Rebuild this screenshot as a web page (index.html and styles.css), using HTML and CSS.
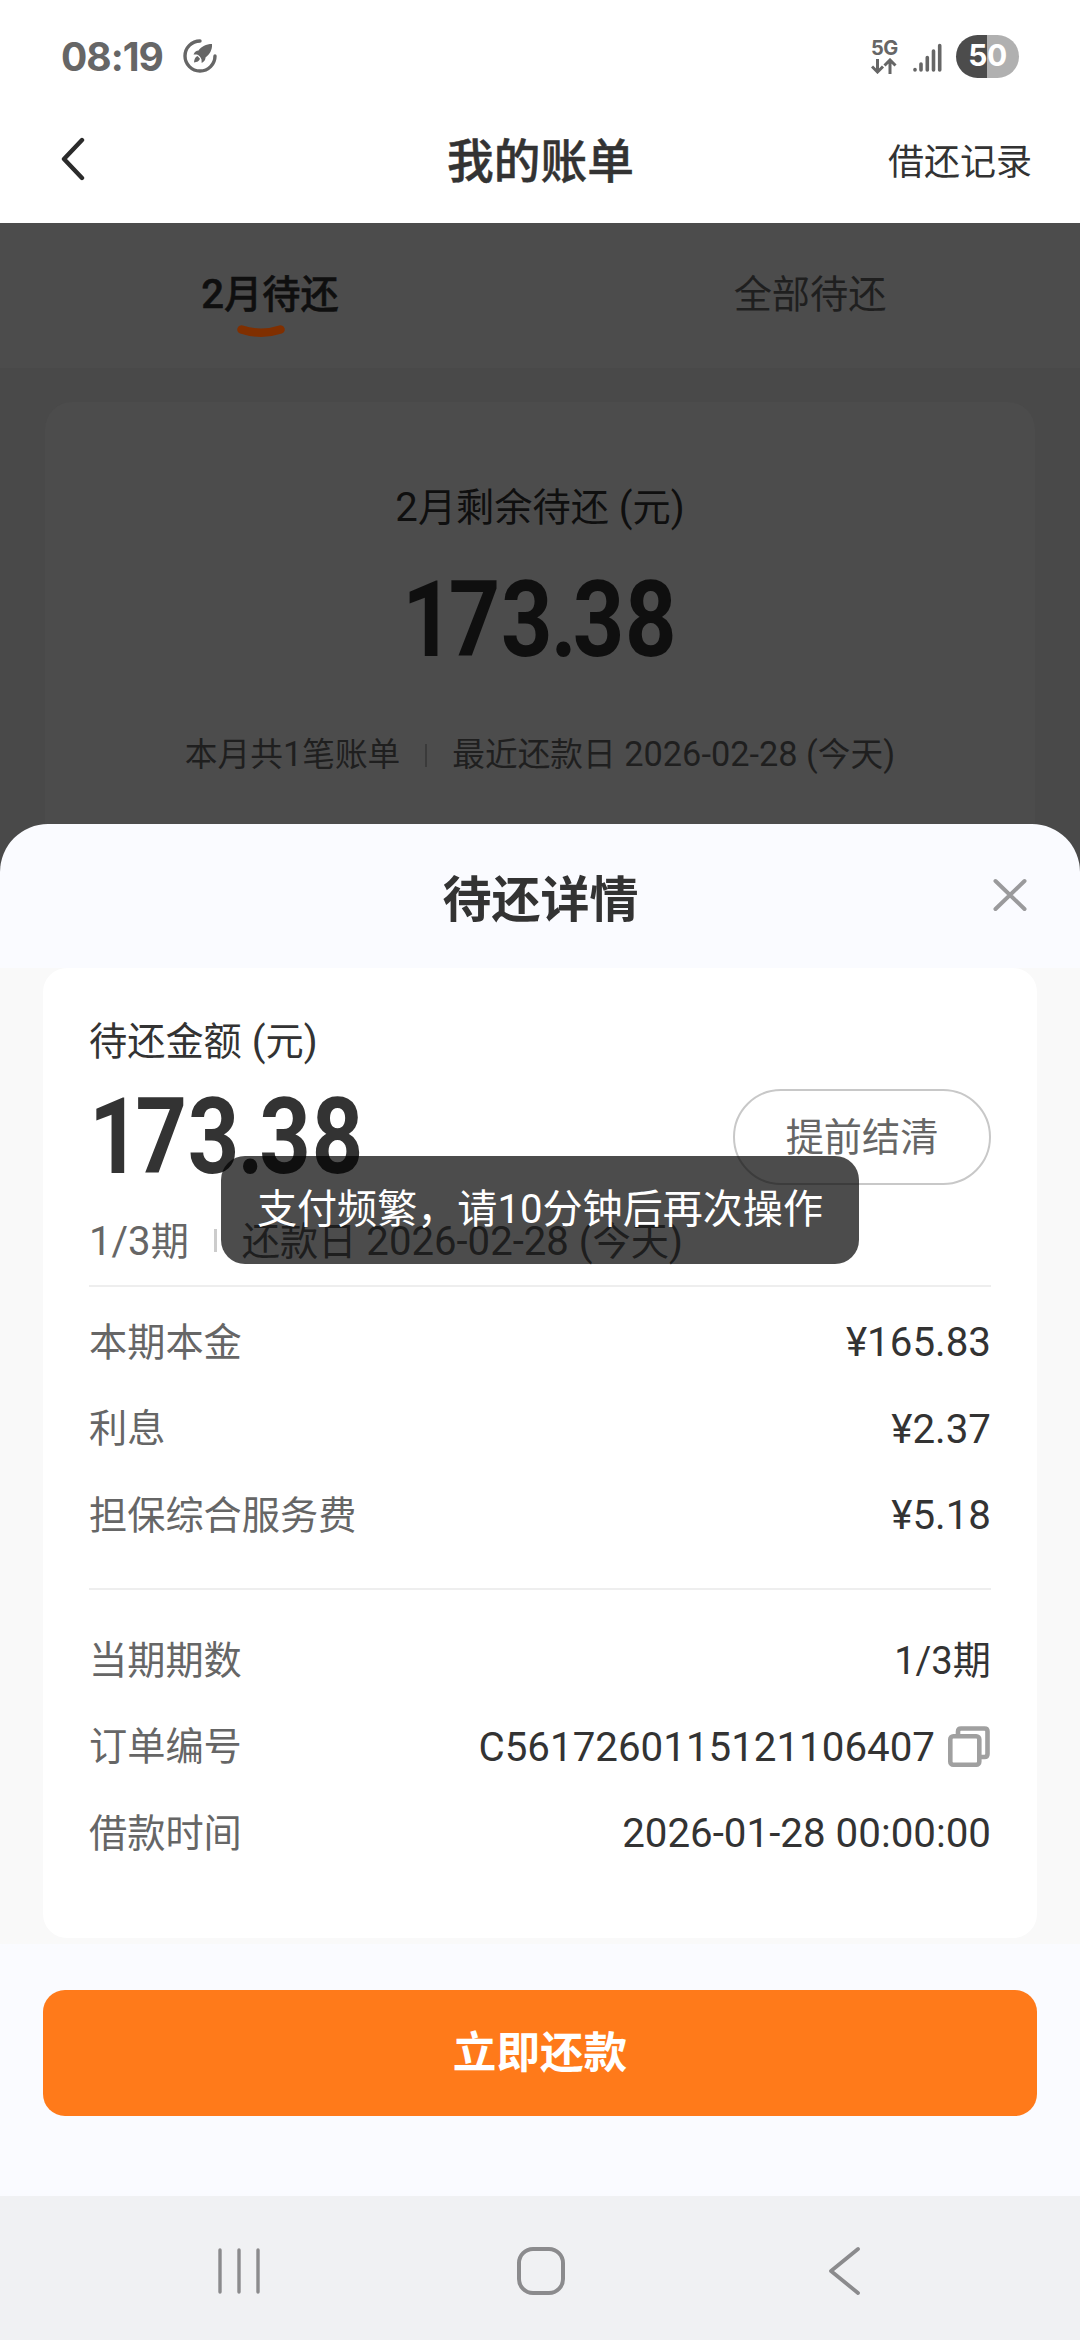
FILE: index.html
```html
<!DOCTYPE html>
<html lang="zh-CN">
<head>
<meta charset="utf-8">
<title>我的账单</title>
<link rel="stylesheet" href="styles.css">
</head>
<body>
<div class="phone">
  <header class="status">
    <div class="status-left">
      <span class="clock">08:19</span>
      <svg class="rocket" width="34" height="34" viewBox="0 0 34 34">
        <path d="M17 2A15 15 0 1 0 32 17" fill="none" stroke="#666" stroke-width="3.4" stroke-linecap="round"/>
        <path d="M29 5C23 5 18.500 7.500 15.500 11.500C13.500 11.500 11.500 13 10.500 15.500L14 15.500C16 16 18 18.500 18.500 20.500L18.700 24C21.500 22.500 22.500 20.500 22.500 18.500C26.500 15.500 29.500 11 29 5Z" fill="#666"/>
        <path d="M14.500 17C12 18 11.300 20.500 11 23.500C14 23.200 16.300 22.200 17 19.800Z" fill="#666"/>
      </svg>
    </div>
    <div class="status-right">
      <div class="net">
        <span class="net-type">5G</span>
        <svg width="26" height="16" viewBox="0 0 26 16" fill="none" stroke="#666" stroke-width="3">
          <path d="M6.500 1V14M1 8.500L6.500 14L12 8.500M19 16V2M13.500 7.500L19 2L24.500 7.500"/>
        </svg>
      </div>
      <svg class="signal" width="29" height="30" viewBox="0 0 29 30" stroke="#666" stroke-width="3.600" stroke-linecap="round">
        <path d="M2 27.500V28M8 22V28M14.300 15.500V28M20.500 9V28M26.700 3.500V28"/>
      </svg>
      <div class="battery"><span>50</span></div>
    </div>
  </header>

  <nav class="titlebar">
    <svg class="back" width="24" height="44" viewBox="0 0 24 44" fill="none" stroke="#2b2b2b" stroke-width="4.400" stroke-linecap="round" stroke-linejoin="round">
      <path d="M21 3L3 22L21 41"/>
    </svg>
    <h1>我的账单</h1>
    <a class="history">借还记录</a>
  </nav>

  <main class="page">
    <div class="tabs">
      <div class="tab active"><span class="n">2</span>月待还
        <svg class="smile" width="50" height="16" viewBox="0 0 50 16"><path d="M5.500 5.500Q25 12 44.500 5.500" fill="none" stroke="#802f00" stroke-width="8.500" stroke-linecap="round"/></svg>
      </div>
      <div class="tab">全部待还</div>
    </div>
    <section class="summary">
      <p class="summary-label"><span class="n">2</span>月剩余待还<span class="n"> (</span>元<span class="n">)</span></p>
      <p class="amount"><span class="one">1</span>73<span class="dot">.</span>38</p>
      <p class="summary-foot">
        <span>本月共<span class="n">1</span>笔账单</span><i class="bar"></i><span>最近还款日<span class="n"> 2026-02-28 (</span>今天<span class="n">)</span></span>
      </p>
    </section>
  </main>

  <section class="sheet">
    <header class="sheet-head">
      <h2>待还详情</h2>
      <svg class="close" width="36" height="34" viewBox="0 0 36 34" fill="none" stroke="#9a9a9c" stroke-width="4" stroke-linecap="round">
        <path d="M3.500 3L32.500 31M32.500 3L3.500 31"/>
      </svg>
    </header>
    <div class="sheet-body">
      <div class="card">
        <p class="due-label">待还金额<span class="n"> (</span>元<span class="n">)</span></p>
        <div class="due-row">
          <p class="amount"><span class="one">1</span>73<span class="dot">.</span>38</p>
          <button class="settle">提前结清</button>
        </div>
        <p class="due-date"><span><span class="n">1/3</span>期</span><i class="bar"></i><span>还款日<span class="n"> 2026-02-28 (</span>今天<span class="n">)</span></span></p>
        <dl class="rows fees">
          <div><dt>本期本金</dt><dd>¥165.83</dd></div>
          <div><dt>利息</dt><dd>¥2.37</dd></div>
          <div><dt>担保综合服务费</dt><dd>¥5.18</dd></div>
        </dl>
        <dl class="rows info">
          <div><dt>当期期数</dt><dd class="term">1/3期</dd></div>
          <div><dt>订单编号</dt><dd>C5617260115121106407
            <svg class="copy" width="44" height="44" viewBox="0 0 44 44" fill="none" stroke="#a0a0a0" stroke-width="4.600">
              <rect x="3.300" y="11.300" width="29" height="28.500" rx="3"/>
              <path d="M11 10V6.500Q11 3.500 14 3.500H37.500Q40.500 3.500 40.500 6.500V29Q40.500 32 37.500 32H34"/>
            </svg></dd></div>
          <div><dt>借款时间</dt><dd>2026-01-28 00:00:00</dd></div>
        </dl>
      </div>
    </div>
    <footer class="sheet-foot"><button class="pay">立即还款</button></footer>
  </section>

  <footer class="sysnav">
    <svg width="44" height="48" viewBox="0 0 44 48" stroke="#8b8b8d" stroke-width="3.400" stroke-linecap="round"><path d="M3 3V45M22 3V45M41 3V45"/></svg>
    <svg class="home" width="50" height="50" viewBox="0 0 50 50" fill="none" stroke="#8b8b8d" stroke-width="4"><rect x="3" y="3" width="44" height="44" rx="14"/></svg>
    <svg width="34" height="50" viewBox="0 0 34 50" fill="none" stroke="#8b8b8d" stroke-width="3.800" stroke-linecap="round" stroke-linejoin="round"><path d="M31 3L4 25L31 47"/></svg>
  </footer>

  <div class="toast">支付频繁，请10分钟后再次操作</div>
</div>
</body>
</html>
```
FILE: styles.css
```css
* { box-sizing: border-box; margin: 0; padding: 0; }

body {
  width: 1080px;
  background: #fff;
  color: #333;
  font-family: Roboto, "Noto Sans CJK SC", sans-serif;
  font-size: 38.2px;
}

button { font: inherit; }
svg { display: block; flex: none; }

.n { font-size: 1.05em; line-height: 1; white-space: pre; }

.phone {
  position: relative;
  display: flex;
  flex-direction: column;
  height: 2340px;
  overflow: hidden;
}
.phone > * { flex: none; }

/* System status bar */
.status {
  display: flex;
  justify-content: space-between;
  align-items: center;
  height: 112px;
  padding: 0 61px 0 61px;
  color: #666;
}
.status-left, .status-right { display: flex; align-items: center; }
.clock { font: 700 39px/40px Inter, sans-serif; width: 122px; letter-spacing: -1px; padding-top: 1px; }
.status-right { gap: 16px; }
.net { display: flex; flex-direction: column; gap: 1px; padding-top: 1px; width: 26px; }
.net-type { font: 700 20px/17px Inter, sans-serif; letter-spacing: -0.5px; }
.signal { margin-top: 2px; }
.battery {
  display: flex;
  align-items: center;
  justify-content: center;
  width: 63px;
  height: 43px;
  margin-left: -2px;
  border-radius: 22px;
  background: linear-gradient(90deg, #4c4c4c 50%, #b0b0b0 50%);
  color: #fff;
  font: 700 30px/40px Inter, sans-serif;
}
.battery span { margin-top: -2px; letter-spacing: -0.5px; }

/* Title bar */
.titlebar {
  display: grid;
  grid-template-columns: 1fr auto 1fr;
  align-items: center;
  height: 111px;
  padding: 0 48px 15px 61px;
}
.titlebar h1 { font-size: 46.7px; font-weight: 500; line-height: 60px; margin: 4px 6px 0 -6px; -webkit-text-stroke: 0.5px; }
.back { margin-bottom: 2px; }
.history { justify-self: end; font-size: 36px; line-height: 50px; margin-top: 5px; }

/* Dimmed page behind the sheet; it runs on under the sheet's rounded corners */
.page { height: 661px; background: #494949; overflow: hidden; }
.tabs { display: grid; grid-template-columns: 1fr 1fr; height: 145px; background: #4c4c4c; }
.tab { position: relative; padding-top: 45px; line-height: 54px; text-align: center; color: #1f1f1f; }
.tab.active { color: #0f0f0f; font-weight: 500; -webkit-text-stroke: 0.5px; }
.smile { position: absolute; left: 236px; top: 101px; }
.summary {
  display: flex;
  flex-direction: column;
  align-items: center;
  height: 482px;
  margin: 34px 45px 0;
  border-radius: 27px 27px 0 0;
  background: #4c4c4c;
  color: #0f0f0f;
}
.summary-label { margin-top: 79px; line-height: 54px; }
.summary-foot {
  display: flex;
  align-items: center;
  margin-top: 51px;
  font-size: 32.7px;
  line-height: 46px;
  color: #1f1f1f;
}
.bar { width: 2px; height: 23px; margin: 0 25px; background: #3a3a3a; }

.amount {
  font: 700 105px/120px Roboto, sans-serif;
  letter-spacing: 1px;
  transform: scaleX(0.855);
}
.amount .one { letter-spacing: -6px; }
.amount .dot { letter-spacing: -5px; margin-left: -3px; }
.summary .amount { margin-top: 26px; }

/* Bottom sheet */
.sheet {
  position: relative;
  height: 1372px;
  margin-top: -60px;
  border-radius: 48px 48px 0 0;
  background: #fafbff;
}
.sheet-head {
  display: grid;
  grid-template-columns: 1fr auto 1fr;
  align-items: center;
  height: 144px;
  padding: 0 52px 0 53px;
}
.sheet-head h2 { grid-column: 2; font-size: 49px; font-weight: 700; line-height: 64px; margin-top: 10px; }
.close { justify-self: end; margin-bottom: 3px; }
.sheet-body { height: 976px; padding: 0 43px; background: #f9f9f9; }
.card { height: 970px; padding: 0 46px; border-radius: 24px; background: #fff; }
.due-label { padding-top: 47px; line-height: 54px; }
.due-row { display: flex; justify-content: space-between; align-items: center; height: 120px; margin-top: 8px; }
.due-row .amount { transform-origin: left center; padding-top: 2px; }
.settle {
  width: 258px;
  height: 96px;
  padding-bottom: 5px;
  border: 2px solid #c8c8c8;
  border-radius: 48px;
  background: #fff;
  color: #666;
}
.due-date { display: flex; align-items: center; height: 54px; margin-top: 14px; color: #666; }
.due-date .bar { width: 3px; margin: 4px 25px 0; background: #ccc; }
.rows { border-top: 2px solid #eee; }
.rows > div { display: flex; justify-content: space-between; align-items: center; height: 86.6px; }
.rows dt { color: #666; margin-top: -8px; }
.rows dd { display: flex; align-items: center; font-size: 40.3px; margin-top: -1px; }
.rows .term { font-size: 38.2px; margin-top: -8px; }
.fees { height: 303px; margin-top: 20px; padding-top: 13px; }
.info { padding-top: 28px; }
.copy { margin: 0 0 0 12px; }
.sheet-foot { padding: 46px 43px 0; }
.pay {
  width: 994px;
  height: 126px;
  padding-bottom: 8px;
  border: 0;
  border-radius: 22px;
  background: #ff7a1a;
  color: #fff;
  font-size: 43.6px;
  font-weight: 700;
}

/* System navigation */
.sysnav {
  display: flex;
  align-items: center;
  justify-content: space-between;
  height: 144px;
  padding: 6px 219px 0 217px;
  background: #f0f1f3;
}
.home { margin: 0 3px 0 -3px; }

/* Toast over the sheet */
.toast {
  position: absolute;
  left: 221px;
  top: 1156px;
  width: 638px;
  height: 108px;
  border-radius: 24px;
  background: rgba(0, 0, 0, 0.7);
  color: #fff;
  font-size: 40.1px;
  line-height: 107px;
  text-align: center;
  white-space: nowrap;
}
```
